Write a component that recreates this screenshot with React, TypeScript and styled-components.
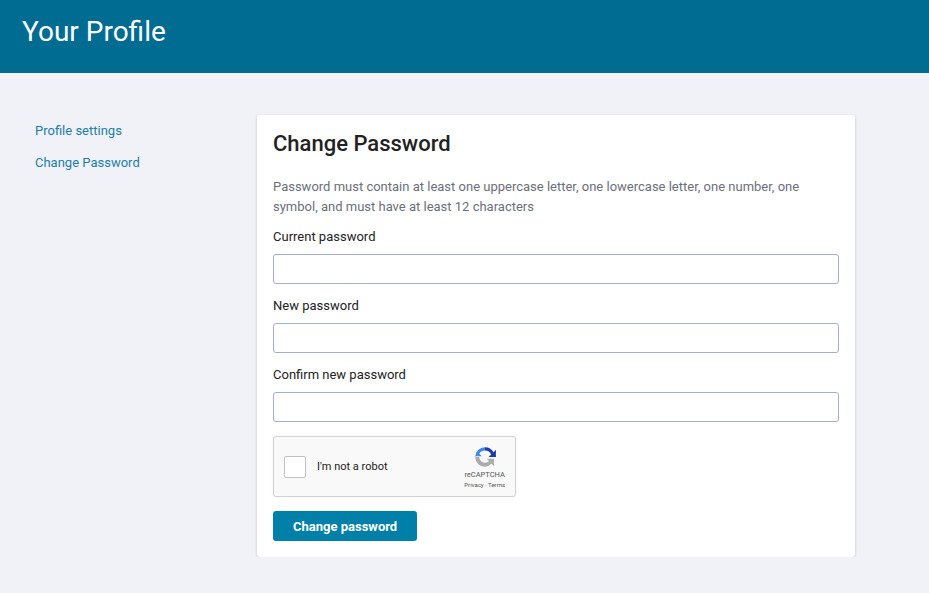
import styled, { createGlobalStyle } from "styled-components";

const Global = createGlobalStyle`
  body { margin: 0; background: #f1f2f7; font-family: Roboto, "Liberation Sans", sans-serif; }
`;

const Header = styled.header`
  height: 73px;
  background: #006c92;
  display: flex;
  align-items: center;
  padding: 0 22px 10px;
  box-sizing: border-box;
  h1 { margin: 0; color: #fff; font-weight: 400; font-size: 28px; }
`;

const Main = styled.div`
  display: flex;
  padding: 42px 0 0 35px;
`;

const Sidebar = styled.nav`
  width: 222px;
  display: flex;
  flex-direction: column;
  gap: 16px;
  padding-top: 8px;
`;

const NavLink = styled.a`
  color: #1b7fa6;
  font-size: 13px;
  line-height: 16px;
  text-decoration: none;
`;

const Card = styled.section`
  width: 598px;
  box-sizing: border-box;
  background: #fff;
  border-radius: 3px;
  box-shadow: 0 1px 3px rgba(0,0,0,0.2);
  padding: 16px 16px 16px;
`;

const Title = styled.h2`
  margin: 0 0 20px;
  font-size: 22px;
  font-weight: 500;
  color: #222;
  line-height: 26px;
`;

const Hint = styled.p`
  margin: 0 0 12px;
  font-size: 13px;
  line-height: 20px;
  color: #6b6f7a;
`;

const Label = styled.label`
  display: block;
  font-size: 13px;
  color: #222;
  line-height: 16px;
  margin-bottom: 9px;
`;

const Input = styled.input`
  display: block;
  width: 100%;
  height: 30px;
  box-sizing: border-box;
  border: 1px solid #a5acd6;
  border-radius: 3px;
  margin-bottom: 14px;
`;

const Captcha = styled.div`
  width: 243px;
  height: 61px;
  box-sizing: border-box;
  border: 1px solid #d3d3d3;
  border-radius: 3px;
  background: #f9f9f9;
  display: flex;
  align-items: center;
  padding: 0 10px;
  box-shadow: 0 0 2px rgba(0,0,0,0.08);
`;

const Box = styled.div`
  width: 20px;
  height: 20px;
  border: 1px solid #c1c1c1;
  border-radius: 2px;
  background: #fff;
  margin-right: 11px;
`;

const CaptchaText = styled.span`
  font-size: 11px;
  color: #222;
  flex: 1;
`;

const Brand = styled.div`
  display: flex;
  flex-direction: column;
  align-items: center;
  font-size: 7.5px;
  color: #555;
  line-height: 10px;
  small { font-size: 6px; }
`;

const Button = styled.button`
  margin-top: 14px;
  height: 30px;
  padding: 0 20px;
  border: none;
  border-radius: 3px;
  background: #0080a8;
  color: #fff;
  font-family: inherit;
  font-weight: 700;
  font-size: 13px;
`;

export default function App() {
  return (
    <>
      <Global />
      <Header><h1>Your Profile</h1></Header>
      <Main>
        <Sidebar>
          <NavLink href="#">Profile settings</NavLink>
          <NavLink href="#">Change Password</NavLink>
        </Sidebar>
        <Card>
          <Title>Change Password</Title>
          <Hint>Password must contain at least one uppercase letter, one lowercase letter, one number, one symbol, and must have at least 12 characters</Hint>
          <Label>Current password</Label>
          <Input type="password" />
          <Label>New password</Label>
          <Input type="password" />
          <Label>Confirm new password</Label>
          <Input type="password" />
          <Captcha>
            <Box />
            <CaptchaText>I'm not a robot</CaptchaText>
            <Brand>
              <svg width="26" height="26" viewBox="0 0 32 32">
                <path d="M16 4a12 12 0 0 1 10.4 6l3-3v9h-9l3.2-3.2A8 8 0 0 0 16 8z" fill="#1c3aa9" />
                <path d="M4 16A12 12 0 0 1 16 4v4a8 8 0 0 0-7 4l3 3H3z" fill="#4285f4" />
                <path d="M16 28a12 12 0 0 1-12-12h5a7 7 0 0 0 12 5l-3-3h9v9l-3-3a12 12 0 0 1-8 4z" fill="#ababab" />
              </svg>
              <span>reCAPTCHA</span>
              <small>Privacy · Terms</small>
            </Brand>
          </Captcha>
          <Button>Change password</Button>
        </Card>
      </Main>
    </>
  );
}
